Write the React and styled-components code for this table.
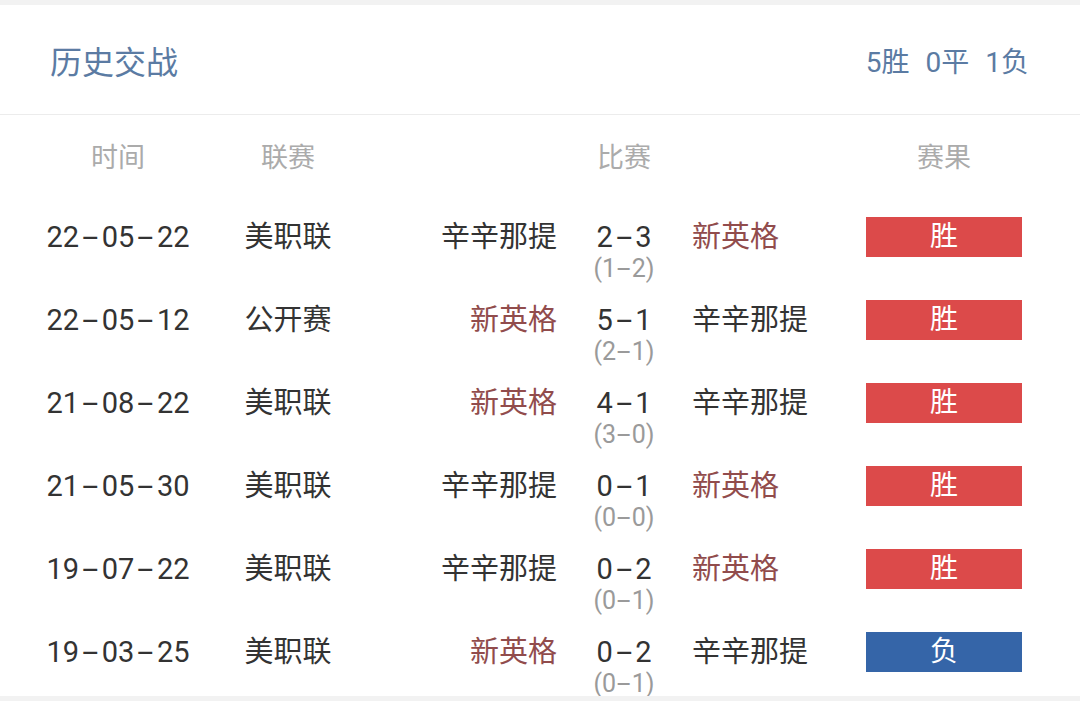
import React from 'react'
import styled, { createGlobalStyle } from 'styled-components'

const GlobalStyle = createGlobalStyle`
  html, body {
    margin: 0;
    padding: 0;
    background: #f2f2f2;
    font-family: Roboto, "Noto Sans CJK SC", sans-serif;
  }
`

const Card = styled.section`
  margin-top: 5px;
  background: #fff;
  min-height: 691px;
`

const TitleBar = styled.header`
  height: 109px;
  display: flex;
  align-items: center;
  justify-content: space-between;
  padding: 0 51px 0 50px;
  border-bottom: 1px solid #ececec;
  color: #5b7ba3;
`

const Title = styled.h2`
  margin: 0;
  font-size: 32px;
  font-weight: 400;
`

const Summary = styled.div`
  display: flex;
  gap: 16px;
  font-size: 28px;
`

const Grid = styled.div`
  display: grid;
  grid-template-columns: 236px 104px 217px 134px 175px 156px 1fr;
  align-items: start;
`

const HeadRow = styled(Grid)`
  height: 81px;
  padding-top: 23px;
  box-sizing: border-box;
  color: #ababab;
  font-size: 27px;
  line-height: 40px;
`

const Row = styled(Grid)`
  height: 83px;
  padding-top: 21px;
  box-sizing: border-box;
  color: #333;
  font-size: 29px;
  line-height: 40px;
`

const Cell = styled.div`
  text-align: ${({ $align }) => $align || 'center'};
  padding-left: ${({ $pl }) => $pl || 0}px;
  white-space: nowrap;
`

const Team = styled(Cell)`
  color: ${({ $hot }) => ($hot ? '#914c4c' : '#333')};
`

const Score = styled.div`
  display: flex;
  flex-direction: column;
  align-items: center;
`

const Half = styled.span`
  font-size: 25px;
  line-height: 24px;
  color: #9a9a9a;
  --sep: 0.62em;
`

// the source font draws a long, spaced dash between numbers
const Sep = styled.span`
  display: inline-block;
  width: var(--sep, 0.78em);
  text-align: center;
  transform: scaleX(2);
`

const Badge = styled.div`
  height: 40px;
  background: ${({ $win }) => ($win ? '#dc4a4a' : '#3565a8')};
  color: #fff;
  font-size: 28px;
  line-height: 40px;
  text-align: center;
`

const Dashed = ({ text }) => {
  const parts = text.split('-')
  return parts.map((p, i) => (
    <React.Fragment key={i}>
      {i > 0 && <Sep>-</Sep>}
      {p}
    </React.Fragment>
  ))
}

const FOCUS = '新英格'

const matches = [
  { date: '22-05-22', league: '美职联', home: '辛辛那提', score: '2-3', half: '(1-2)', away: '新英格', win: true },
  { date: '22-05-12', league: '公开赛', home: '新英格', score: '5-1', half: '(2-1)', away: '辛辛那提', win: true },
  { date: '21-08-22', league: '美职联', home: '新英格', score: '4-1', half: '(3-0)', away: '辛辛那提', win: true },
  { date: '21-05-30', league: '美职联', home: '辛辛那提', score: '0-1', half: '(0-0)', away: '新英格', win: true },
  { date: '19-07-22', league: '美职联', home: '辛辛那提', score: '0-2', half: '(0-1)', away: '新英格', win: true },
  { date: '19-03-25', league: '美职联', home: '新英格', score: '0-2', half: '(0-1)', away: '辛辛那提', win: false },
]

const App = () => {
  return (
    <>
      <GlobalStyle />
      <Card>
        <TitleBar>
          <Title>历史交战</Title>
          <Summary>
            <span>5胜</span>
            <span>0平</span>
            <span>1负</span>
          </Summary>
        </TitleBar>
        <HeadRow>
          <Cell>时间</Cell>
          <Cell>联赛</Cell>
          <Cell />
          <Cell>比赛</Cell>
          <Cell />
          <Cell>赛果</Cell>
        </HeadRow>
        {matches.map((m, i) => (
          <Row key={i}>
            <Cell><Dashed text={m.date} /></Cell>
            <Cell>{m.league}</Cell>
            <Team $align="right" $hot={m.home === FOCUS}>{m.home}</Team>
            <Score>
              <span><Dashed text={m.score} /></span>
              <Half><Dashed text={m.half} /></Half>
            </Score>
            <Team $align="left" $pl={1} $hot={m.away === FOCUS}>{m.away}</Team>
            <Badge $win={m.win}>{m.win ? '胜' : '负'}</Badge>
          </Row>
        ))}
      </Card>
    </>
  )
}

export default App
